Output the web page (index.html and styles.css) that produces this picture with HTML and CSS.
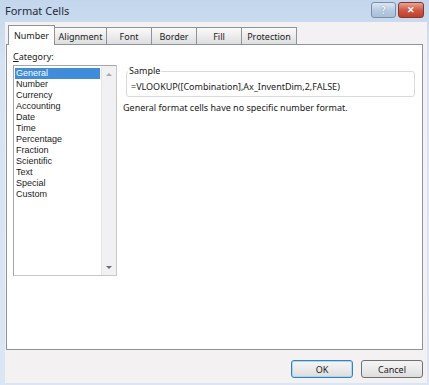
FILE: index.html
```html
<!DOCTYPE html>
<html lang="en">
<head>
    <meta charset="UTF-8">
    <title>Format Cells</title>
    <link rel="stylesheet" href="styles.css">
</head>
<body>
    <div class="window">
        <div class="titlebar">
            <span class="title">Format Cells</span>
            <div class="caption-buttons">
                <div class="cap-btn help">?</div>
                <div class="cap-btn close">&#x2715;</div>
            </div>
        </div>

        <div class="dialog">
            <div class="tabs">
                <div class="tab active">Number</div>
                <div class="tab">Alignment</div>
                <div class="tab">Font</div>
                <div class="tab">Border</div>
                <div class="tab">Fill</div>
                <div class="tab">Protection</div>
            </div>

            <div class="panel">
                <div class="category">
                    <div class="label"><u>C</u>ategory:</div>
                    <div class="listbox">
                        <ul class="items">
                            <li class="selected">General</li>
                            <li>Number</li>
                            <li>Currency</li>
                            <li>Accounting</li>
                            <li>Date</li>
                            <li>Time</li>
                            <li>Percentage</li>
                            <li>Fraction</li>
                            <li>Scientific</li>
                            <li>Text</li>
                            <li>Special</li>
                            <li>Custom</li>
                        </ul>
                        <div class="scrollbar">
                            <span class="arrow up"></span>
                            <span class="arrow down"></span>
                        </div>
                    </div>
                </div>

                <div class="details">
                    <fieldset class="sample">
                        <legend>Sample</legend>
                        <div class="sample-value">=VLOOKUP([Combination],Ax_InventDim,2,FALSE)</div>
                    </fieldset>
                    <p class="description">General format cells have no specific number format.</p>
                </div>
            </div>

            <div class="buttons">
                <button class="btn default">OK</button>
                <button class="btn">Cancel</button>
            </div>
        </div>
    </div>
</body>
</html>
```

FILE: styles.css
```css
body {
    margin: 0;
    padding: 0;
    font-family: "Noto Sans", "Open Sans", sans-serif;
    font-size: 9px;
    color: #1a1a1a;
}

.window {
    width: 429px;
    height: 385px;
    box-sizing: border-box;
    background: linear-gradient(#c3d6ec, #d5e3f3 60px, #dbe6f4);
    display: flex;
    flex-direction: column;
    padding: 0 2px 3px 5px;
}

.titlebar {
    height: 22px;
    display: flex;
    align-items: center;
    justify-content: space-between;
    flex-shrink: 0;
}

.title {
    font-size: 11px;
    color: #1e2c3c;
    margin-top: -1px;
}

.caption-buttons {
    display: flex;
    gap: 2px;
    margin-top: -3px;
    margin-right: 3px;
}

.cap-btn {
    height: 14px;
    border: 1px solid #7a8ea8;
    border-radius: 3px;
    font-size: 10px;
    line-height: 14px;
    text-align: center;
    font-weight: bold;
}

.help {
    width: 23px;
    background: linear-gradient(#dce7f4, #b8cbe2 50%, #a8bfdb);
    color: #f4f8fc;
    text-shadow: 0 0 1px #5d7290;
}

.close {
    width: 24px;
    background: linear-gradient(#e8a595, #cf5a45 50%, #c23e2a);
    border-color: #8a3527;
    color: #fff;
    font-size: 9px;
}

.dialog {
    flex: 1;
    background: #f4f1f3;
    display: flex;
    flex-direction: column;
    padding: 3px 4px 5px 1px;
}

.tabs {
    display: flex;
    align-items: flex-end;
    height: 19px;
    padding-left: 2px;
    position: relative;
    z-index: 1;
}

.tab {
    height: 17px;
    line-height: 17px;
    padding: 0;
    border: 1px solid #8e9299;
    border-bottom: none;
    margin-right: -1px;
    background: linear-gradient(#fbfbfb, #ececec 50%, #dddee0);
    box-sizing: border-box;
    color: #222;
    text-align: center;
}

.tab:nth-child(2) { width: 53px; }
.tab:nth-child(3) { width: 46px; }
.tab:nth-child(4) { width: 46px; }
.tab:nth-child(5) { width: 46px; }
.tab:nth-child(6) { width: 56px; }

.tab.active {
    width: 47px;
    height: 20px;
    line-height: 19px;
    background: #fff;
    margin-bottom: -1px;
}

.panel {
    height: 306px;
    box-sizing: border-box;
    background: #fff;
    border: 1px solid #8e9299;
    display: flex;
    padding: 6px 7px 0 6px;
}

.category {
    width: 104px;
    flex-shrink: 0;
}

.label {
    height: 13px;
    line-height: 12px;
    margin-bottom: 1px;
}

.listbox {
    height: 211px;
    box-sizing: border-box;
    border: 1px solid #a6a6a6;
    border-right-color: #c7c7c7;
    border-bottom-color: #c7c7c7;
    display: flex;
    background: #fff;
}

.items {
    list-style: none;
    margin: 0;
    padding: 2px 1px;
    flex: 1;
    font-family: "Liberation Sans", Arial, sans-serif;
}

.items li {
    height: 11px;
    line-height: 11px;
    padding-left: 1px;
}

.items li.selected {
    background: #3e8ddd;
    color: #fff;
}

.scrollbar {
    width: 15px;
    background: #f1f1f3;
    border-left: 1px solid #e6e6e8;
    display: flex;
    flex-direction: column;
    justify-content: space-between;
    align-items: center;
    padding: 7px 0 6px;
    box-sizing: border-box;
}

.arrow {
    width: 0;
    height: 0;
    border-left: 3px solid transparent;
    border-right: 3px solid transparent;
}

.arrow.up {
    border-bottom: 3px solid #a8a8a8;
}

.arrow.down {
    border-top: 3px solid #6e6e6e;
}

.details {
    flex: 1;
    padding-left: 6px;
}

.sample {
    margin: 15px 0 0 3px;
    padding: 0 4px 0 2px;
    border: 1px solid #dadada;
    border-radius: 3px;
    height: 31px;
    box-sizing: border-box;
}

.sample legend {
    padding: 0 1px;
    margin-left: -1px;
    line-height: 10px;
}

.sample-value {
    line-height: 12px;
    padding: 5px 0 0 2px;
}

.description {
    margin: 5px 0 0 0;
    line-height: 12px;
}

.buttons {
    display: flex;
    justify-content: flex-end;
    gap: 8px;
    padding-top: 10px;
}

.btn {
    width: 62px;
    height: 18px;
    font-family: inherit;
    font-size: 9px;
    color: #1a1a1a;
    border: 1px solid #707070;
    border-radius: 3px;
    background: linear-gradient(#f4f4f4, #ebebeb 50%, #dcdcdc);
    padding: 0;
}

.btn.default {
    border-color: #3c7fb1;
    box-shadow: inset 0 0 0 1px #a4d8f5;
}
```
